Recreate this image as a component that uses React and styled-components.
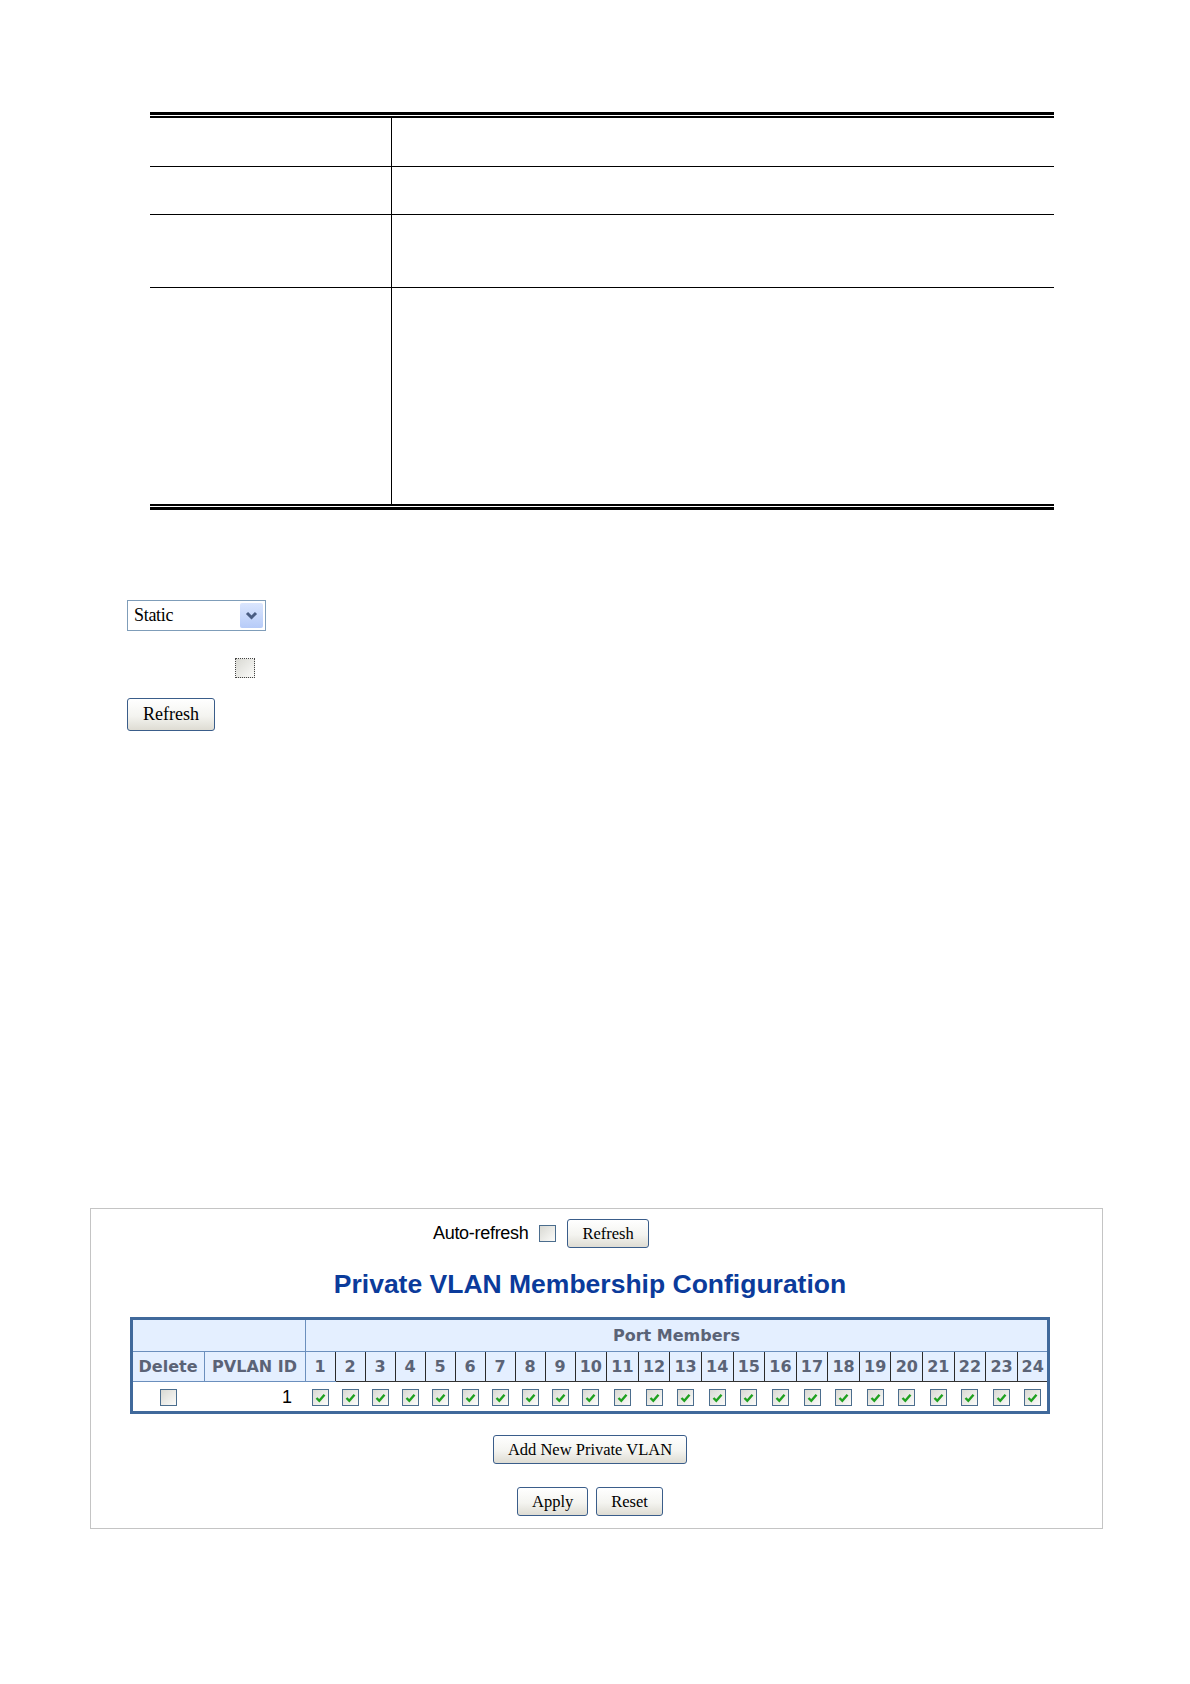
import React from 'react';
import styled, { createGlobalStyle } from 'styled-components';

const GlobalStyle = createGlobalStyle`
  html, body {
    margin: 0;
    padding: 0;
    background: #ffffff;
  }
  body {
    font-family: "Liberation Sans", Arial, sans-serif;
    color: #000;
  }
`;

const Page = styled.div`
  width: 1190px;
  min-height: 1684px;
  padding-top: 112px;
  box-sizing: border-box;
`;

/* ---------- empty parameter table ---------- */

const RuleFrame = styled.div`
  margin-left: 150px;
  width: 904px;
  border-top: 3px solid #000;
  border-bottom: 3px solid #000;
  padding: 1px 0;
`;

const DescTable = styled.table`
  width: 100%;
  border-collapse: collapse;
  border-top: 2px solid #000;
  border-bottom: 2px solid #000;
`;

const DescCell = styled.td`
  height: ${props => props.$h}px;
  padding: 0;
  border-bottom: ${props => (props.$last ? 'none' : '1px solid #000')};
  border-right: ${props => (props.$first ? '1px solid #000' : 'none')};
  width: ${props => (props.$first ? '241px' : 'auto')};
`;

/* ---------- form controls ---------- */

const Controls = styled.div`
  margin: 90px 0 0 127px;
  display: flex;
  flex-direction: column;
  align-items: flex-start;
`;

const FakeSelect = styled.div`
  width: 139px;
  height: 31px;
  box-sizing: border-box;
  border: 1px solid #7f9db9;
  display: flex;
  align-items: center;
  justify-content: space-between;
  padding: 0 2px 0 6px;
  font-family: "Liberation Serif", serif;
  font-size: 18px;
  letter-spacing: -0.3px;
`;

const SelectArrow = styled.span`
  width: 23px;
  height: 25px;
  border-radius: 2px;
  background: linear-gradient(#dbe6fe, #b6cbf8);
  display: flex;
  align-items: center;
  justify-content: center;
`;

const CheckRow = styled.div`
  margin: 27px 0 0 108px;
`;

const Box = styled.span`
  display: inline-flex;
  align-items: center;
  justify-content: center;
  width: ${props => props.$size || 17}px;
  height: ${props => props.$size || 17}px;
  box-sizing: border-box;
  border: 1px ${props => (props.$dotted ? 'dotted #444' : 'solid #4b6d8d')};
  background: linear-gradient(135deg, #d9d9d3, #fbfbf9);
  vertical-align: middle;
`;

const Button = styled.button`
  font-family: "Liberation Serif", "Times New Roman", serif;
  font-size: ${props => (props.$big ? 18 : 16.5)}px;
  height: ${props => (props.$big ? 33 : 29)}px;
  padding: 0 ${props => (props.$big ? 15 : 14)}px;
  border: 1px solid #3a5d8a;
  border-radius: 3px;
  background: linear-gradient(#ffffff, #f4f4f0 55%, #dedcd3);
  color: #000;
  cursor: pointer;
  white-space: nowrap;
`;

const TopRefresh = styled.div`
  margin-top: 20px;
`;

/* ---------- private vlan panel ---------- */

const Panel = styled.div`
  margin: 477px 0 0 90px;
  width: 1013px;
  box-sizing: border-box;
  border: 1px solid #c4c4c4;
  padding: 10px 54px 12px 40px;
`;

const Column = styled.div`
  width: 918px;
  display: flex;
  flex-direction: column;
  align-items: center;
`;

const AutoRow = styled.div`
  align-self: flex-start;
  margin-left: 302px;
  display: flex;
  align-items: center;
  gap: 11px;
  height: 29px;
`;

const AutoLabel = styled.span`
  font-size: 18px;
  letter-spacing: -0.3px;
`;

const Title = styled.h1`
  margin: 21px 0 18px;
  font-size: 26.5px;
  line-height: 30px;
  font-weight: bold;
  color: #0b3b9b;
`;

const MemberTable = styled.table`
  width: 918px;
  table-layout: fixed;
  border-collapse: collapse;
  border: 3px solid #40699b;
`;

const HeadCell = styled.th`
  height: ${props => props.$h || 29}px;
  padding: 0;
  background: #e4efff;
  font-family: "DejaVu Sans", Verdana, sans-serif;
  font-size: 16px;
  line-height: 18px;
  font-weight: bold;
  color: #5b6376;
  text-align: center;
  white-space: nowrap;
  border-left: 1px solid ${props => (props.$dark ? '#2a2a2a' : '#6b8fbd')};
  border-bottom: 1px solid ${props => (props.$dark ? '#333' : '#6b8fbd')};
`;

const DataCell = styled.td`
  height: 29px;
  padding: 0 ${props => (props.$right ? '13px' : '0')} 0 0;
  text-align: ${props => (props.$right ? 'right' : 'center')};
  font-size: 18px;
  line-height: 20px;
  background: #fff;
`;

const ButtonRow = styled.div`
  display: flex;
  gap: 8px;
  margin-top: ${props => props.$top}px;
`;

const Check = () => (
  <svg width="11" height="10" viewBox="0 0 11 10">
    <path d="M1.5 5 L4.3 7.8 L9.5 1.8" fill="none" stroke="#1fa11f" strokeWidth="2.4" />
  </svg>
);

const Checkbox = ({ checked, size, dotted }) => (
  <Box $size={size} $dotted={dotted}>{checked && <Check />}</Box>
);

const ports = Array.from({ length: 24 }, (_, i) => i + 1);
const descRows = [48, 47, 72, 216];

export default function App() {
  return (
    <Page>
      <GlobalStyle />

      <RuleFrame>
        <DescTable>
          <tbody>
            {descRows.map((h, i) => (
              <tr key={i}>
                <DescCell $first $h={h} $last={i === descRows.length - 1} />
                <DescCell $h={h} $last={i === descRows.length - 1} />
              </tr>
            ))}
          </tbody>
        </DescTable>
      </RuleFrame>

      <Controls>
        <FakeSelect>
          <span>Static</span>
          <SelectArrow>
            <svg width="13" height="9" viewBox="0 0 13 9">
              <path d="M2 2 L6.5 6.5 L11 2" fill="none" stroke="#4a5d82" strokeWidth="3" />
            </svg>
          </SelectArrow>
        </FakeSelect>
        <CheckRow>
          <Checkbox size={20} dotted />
        </CheckRow>
        <TopRefresh>
          <Button $big>Refresh</Button>
        </TopRefresh>
      </Controls>

      <Panel>
        <Column>
          <AutoRow>
            <AutoLabel>Auto-refresh</AutoLabel>
            <Checkbox />
            <Button>Refresh</Button>
          </AutoRow>

          <Title>Private VLAN Membership Configuration</Title>

          <MemberTable>
            <colgroup>
              <col style={{ width: 73 }} />
              <col style={{ width: 101 }} />
              {ports.map(p => (
                <col key={p} style={{ width: p < 10 ? 30 : 31.6 }} />
              ))}
            </colgroup>
            <thead>
              <tr>
                <HeadCell colSpan={2} $h={31} />
                <HeadCell colSpan={24} $h={31}>Port Members</HeadCell>
              </tr>
              <tr>
                <HeadCell>Delete</HeadCell>
                <HeadCell>PVLAN ID</HeadCell>
                {ports.map(p => (
                  <HeadCell key={p} $dark={p > 1}>{p}</HeadCell>
                ))}
              </tr>
            </thead>
            <tbody>
              <tr>
                <DataCell><Checkbox /></DataCell>
                <DataCell $right>1</DataCell>
                {ports.map(p => (
                  <DataCell key={p}><Checkbox checked /></DataCell>
                ))}
              </tr>
            </tbody>
          </MemberTable>

          <ButtonRow $top={21}>
            <Button>Add New Private VLAN</Button>
          </ButtonRow>
          <ButtonRow $top={23}>
            <Button>Apply</Button>
            <Button>Reset</Button>
          </ButtonRow>
        </Column>
      </Panel>
    </Page>
  );
}
